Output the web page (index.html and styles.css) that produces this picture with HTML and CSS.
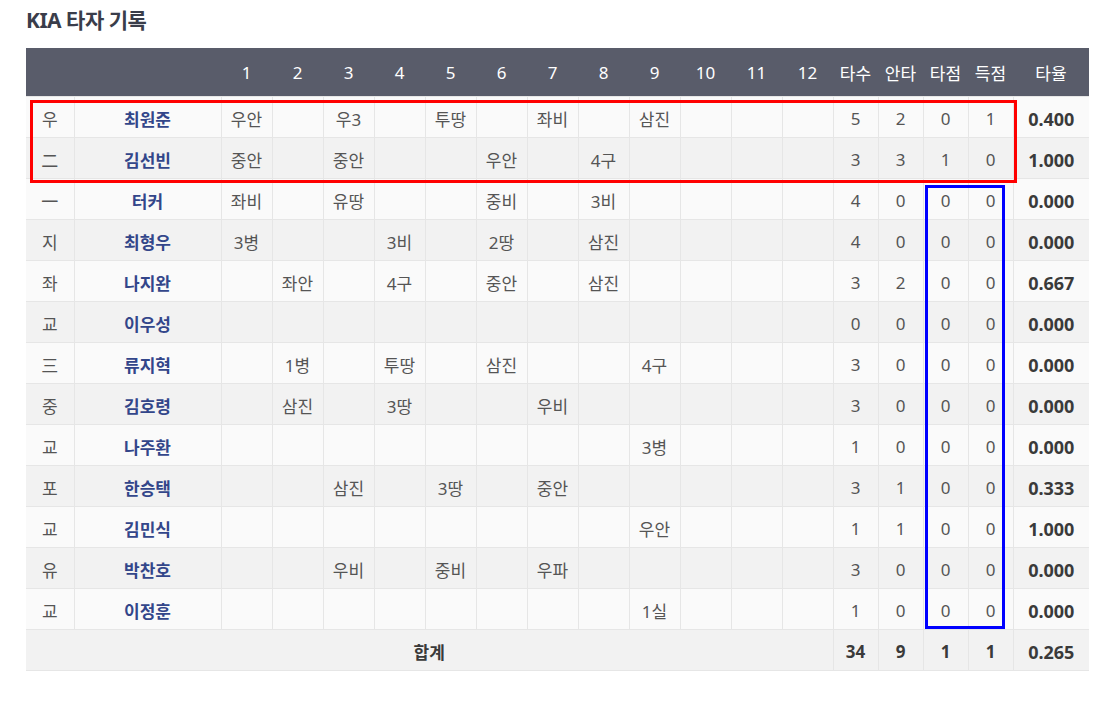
FILE: index.html
```html
<!DOCTYPE html>
<html lang="ko">
<head>
<meta charset="utf-8">
<link rel="stylesheet" href="styles.css">
</head>
<body>
<div class="page">
  <h2 class="title">KIA 타자 기록</h2>
  <div class="wrap">
    <table class="rec">
      <colgroup>
        <col class="c-pos"><col class="c-name">
        <col class="c-inn"><col class="c-inn"><col class="c-inn"><col class="c-inn"><col class="c-inn"><col class="c-inn">
        <col class="c-inn"><col class="c-inn"><col class="c-inn"><col class="c-inn"><col class="c-inn"><col class="c-inn">
        <col class="c-st"><col class="c-st"><col class="c-st"><col class="c-st"><col class="c-avg">
      </colgroup>
      <thead>
        <tr><th></th><th></th><th>1</th><th>2</th><th>3</th><th>4</th><th>5</th><th>6</th><th>7</th><th>8</th><th>9</th><th>10</th><th>11</th><th>12</th><th>타수</th><th>안타</th><th>타점</th><th>득점</th><th>타율</th></tr>
      </thead>
      <tbody>
        <tr><td>우</td><td class="nm">최원준</td><td>우안</td><td></td><td>우3</td><td></td><td>투땅</td><td></td><td>좌비</td><td></td><td>삼진</td><td></td><td></td><td></td><td>5</td><td>2</td><td>0</td><td>1</td><td class="avg">0.400</td></tr>
        <tr><td>二</td><td class="nm">김선빈</td><td>중안</td><td></td><td>중안</td><td></td><td></td><td>우안</td><td></td><td>4구</td><td></td><td></td><td></td><td></td><td>3</td><td>3</td><td>1</td><td>0</td><td class="avg">1.000</td></tr>
        <tr><td>一</td><td class="nm">터커</td><td>좌비</td><td></td><td>유땅</td><td></td><td></td><td>중비</td><td></td><td>3비</td><td></td><td></td><td></td><td></td><td>4</td><td>0</td><td>0</td><td>0</td><td class="avg">0.000</td></tr>
        <tr><td>지</td><td class="nm">최형우</td><td>3병</td><td></td><td></td><td>3비</td><td></td><td>2땅</td><td></td><td>삼진</td><td></td><td></td><td></td><td></td><td>4</td><td>0</td><td>0</td><td>0</td><td class="avg">0.000</td></tr>
        <tr><td>좌</td><td class="nm">나지완</td><td></td><td>좌안</td><td></td><td>4구</td><td></td><td>중안</td><td></td><td>삼진</td><td></td><td></td><td></td><td></td><td>3</td><td>2</td><td>0</td><td>0</td><td class="avg">0.667</td></tr>
        <tr><td>교</td><td class="nm">이우성</td><td></td><td></td><td></td><td></td><td></td><td></td><td></td><td></td><td></td><td></td><td></td><td></td><td>0</td><td>0</td><td>0</td><td>0</td><td class="avg">0.000</td></tr>
        <tr><td>三</td><td class="nm">류지혁</td><td></td><td>1병</td><td></td><td>투땅</td><td></td><td>삼진</td><td></td><td></td><td>4구</td><td></td><td></td><td></td><td>3</td><td>0</td><td>0</td><td>0</td><td class="avg">0.000</td></tr>
        <tr><td>중</td><td class="nm">김호령</td><td></td><td>삼진</td><td></td><td>3땅</td><td></td><td></td><td>우비</td><td></td><td></td><td></td><td></td><td></td><td>3</td><td>0</td><td>0</td><td>0</td><td class="avg">0.000</td></tr>
        <tr><td>교</td><td class="nm">나주환</td><td></td><td></td><td></td><td></td><td></td><td></td><td></td><td></td><td>3병</td><td></td><td></td><td></td><td>1</td><td>0</td><td>0</td><td>0</td><td class="avg">0.000</td></tr>
        <tr><td>포</td><td class="nm">한승택</td><td></td><td></td><td>삼진</td><td></td><td>3땅</td><td></td><td>중안</td><td></td><td></td><td></td><td></td><td></td><td>3</td><td>1</td><td>0</td><td>0</td><td class="avg">0.333</td></tr>
        <tr><td>교</td><td class="nm">김민식</td><td></td><td></td><td></td><td></td><td></td><td></td><td></td><td></td><td>우안</td><td></td><td></td><td></td><td>1</td><td>1</td><td>0</td><td>0</td><td class="avg">1.000</td></tr>
        <tr><td>유</td><td class="nm">박찬호</td><td></td><td></td><td>우비</td><td></td><td>중비</td><td></td><td>우파</td><td></td><td></td><td></td><td></td><td></td><td>3</td><td>0</td><td>0</td><td>0</td><td class="avg">0.000</td></tr>
        <tr><td>교</td><td class="nm">이정훈</td><td></td><td></td><td></td><td></td><td></td><td></td><td></td><td></td><td>1실</td><td></td><td></td><td></td><td>1</td><td>0</td><td>0</td><td>0</td><td class="avg">0.000</td></tr>
      </tbody>
      <tfoot>
        <tr><td colspan="14">합계</td><td>34</td><td>9</td><td>1</td><td>1</td><td class="avg">0.265</td></tr>
      </tfoot>
    </table>
    <div class="hl hl-red"></div>
    <div class="hl hl-blue"></div>
  </div>
</div>
</body>
</html>
```

FILE: styles.css
```css
* { box-sizing: border-box; }
html, body { margin: 0; padding: 0; background: #fff; }
body {
  font-family: "Noto Sans", "Noto Sans CJK KR", sans-serif;
  color: #555;
}
.page { padding: 8px 23px 0 26px; }
.title {
  margin: 0 0 16px 0;
  font-size: 21px;
  line-height: 24px;
  font-weight: 700;
  color: #3a3d4a;
  letter-spacing: -0.5px;
}
.wrap { position: relative; width: 1063px; }
.rec {
  width: 1063px;
  table-layout: fixed;
  border-collapse: collapse;
  font-size: 17px;
}
.c-pos { width: 48px; }
.c-name { width: 147px; }
.c-inn { width: 51px; }
.c-st { width: 45px; }
.c-avg { width: 76px; }
.rec th {
  background: #595c6a;
  color: #fff;
  font-weight: 400;
  height: 48px;
  padding: 2px 0 0 0;
  text-align: center;
  border-bottom: 1px solid #e6e6e6;
}
.rec td {
  height: 41px;
  padding: 4px 0 0 0;
  text-align: center;
  border: 1px solid #e6e6e6;
  border-top: 0;
  white-space: nowrap;
}
.rec tr td:first-child { border-left: 0; }
.rec tr td:last-child { border-right: 0; }
.rec tbody tr:nth-child(odd) td { background: #fafafa; }
.rec tbody tr:nth-child(even) td { background: #f2f2f2; }
.rec .nm { color: #33468a; font-weight: 700; }
.rec .avg { color: #3a3a3a; font-weight: 700; font-size: 18px; }
.rec tfoot td {
  background: #f2f2f2;
  font-weight: 700;
  color: #3a3a3a;
}
.hl { position: absolute; border: 3px solid; }
.hl-red { border-color: #f00; left: 4px; top: 52px; width: 987px; height: 83px; }
.hl-blue { border-color: #00f; left: 899px; top: 137px; width: 80px; height: 444px; }
```
